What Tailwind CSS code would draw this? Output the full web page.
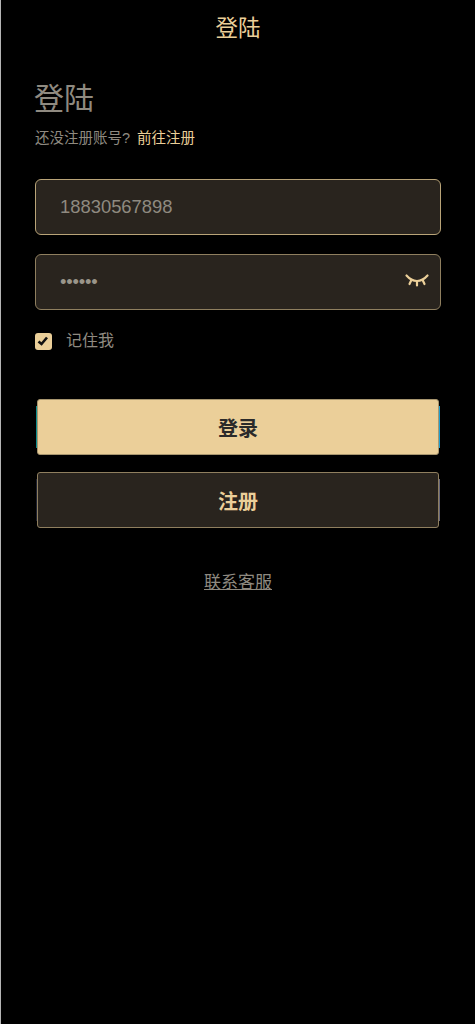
<!DOCTYPE html>
<html lang="zh-CN">
<head>
    <meta charset="UTF-8">
    <meta name="viewport" content="width=device-width, initial-scale=1.0">
    <title>登陆</title>
    <script src="https://cdn.jsdelivr.net/npm/@tailwindcss/browser@4"></script>
</head>
<body class="bg-black font-['Liberation_Sans','Noto_Sans_CJK_SC',sans-serif]">
    <div class="min-h-[1024px] border-l border-[#b5b5b5]">
        <!-- top bar -->
        <header class="h-[56px] pt-[2px] flex items-center justify-center">
            <h1 class="text-[22.500px] leading-none text-[#ebcf99]">登陆</h1>
        </header>

        <main class="px-[34px] pt-[24px]">
            <h2 class="-ml-px text-[30px] leading-[38px] text-[#8f8a80]">登陆</h2>
            <p class="mt-[10px] text-[14.500px] leading-[20px] text-[#8f8a80]">还没注册账号? <a href="#" class="ml-[3px] text-[#ebcf99]">前往注册</a></p>

            <form class="mt-[31px]">
                <div class="h-[56px] w-[406px] flex items-center pl-[24px] rounded-[6px] border border-[#b9a478] bg-[#29241e]">
                    <span class="text-[18.4px] text-[#8f8a80]">18830567898</span>
                </div>
                <div class="mt-[19px] h-[56px] w-[406px] flex items-center justify-between pl-[24px] pr-[11px] rounded-[6px] border border-[#8f7f5f] bg-[#29241e]">
                    <span class="text-[18.4px] tracking-[-0.2px] text-[#9a958a]">••••••</span>
                    <svg class="w-[24px] h-[14px] -mt-[2px]" viewBox="0 0 24 14" fill="none" stroke="#ebcf99" stroke-width="2.200" stroke-linecap="round">
                        <path d="M1.500 1.500C5 5.500 8.500 7 12 7S19 5.500 22.500 1.500"/>
                        <path d="M6.500 5.800L4.500 10M17.500 5.800l2 4.200M12 7v4.500"/>
                    </svg>
                </div>

                <label class="mt-[22px] h-[18px] flex items-center gap-[14px]">
                    <span class="w-[17px] h-[17px] rounded-[3px] bg-[#ebcf99]">
                        <svg class="w-[17px] h-[17px]" viewBox="0 0 17 17" fill="none" stroke="#111111" stroke-width="2.600">
                            <path d="M3.500 8.500L6.500 11 12 4.500"/>
                        </svg>
                    </span>
                    <span class="text-[16px] leading-none text-[#8f8a80]">记住我</span>
                </label>

                <div class="mt-[49px] w-[406px] flex items-center justify-center">
                    <span class="w-px h-[42px] bg-[#0e8f8f]"></span>
                    <button type="button" class="w-[402px] h-[56px] pt-[4px] rounded-[3px] border border-[#a8966f] bg-[#ebcf99] text-[20px] font-bold text-[#2a2a2a]">登录</button>
                    <span class="w-px h-[42px] bg-[#1f9fd0]"></span>
                </div>
                <div class="mt-[17px] w-[406px] flex items-center justify-center">
                    <span class="w-px h-[42px] bg-[#1c2030]"></span>
                    <button type="button" class="w-[402px] h-[56px] pt-[4px] rounded-[3px] border border-[#8f7f5f] bg-[#29241e] text-[20px] font-bold text-[#ebcf99]">注册</button>
                    <span class="w-px h-[42px] bg-[#66667a]"></span>
                </div>
            </form>

            <div class="mt-[43px] w-[406px] text-center">
                <a href="#" class="text-[17px] leading-[22px] text-[#8f8a80] underline">联系客服</a>
            </div>
        </main>
    </div>
</body>
</html>
